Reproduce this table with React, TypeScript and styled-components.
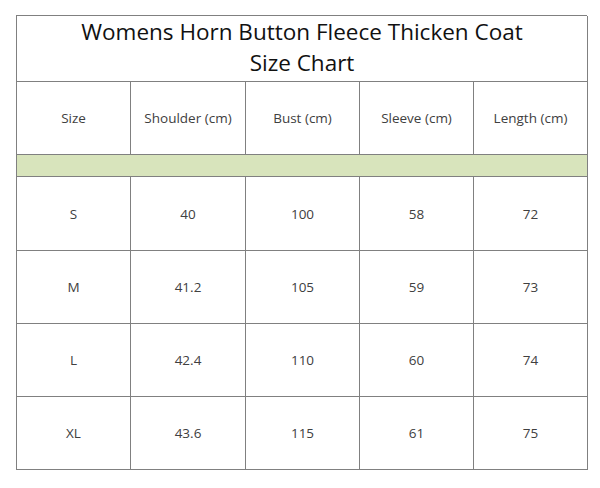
import React from "react";
import styled, { createGlobalStyle } from "styled-components";

const Global = createGlobalStyle`
  html, body { margin: 0; padding: 0; background: #ffffff; }
  body { font-family: "Open Sans", "Liberation Sans", sans-serif; }
`;

const Page = styled.div`
  width: 600px;
  height: 488px;
  padding: 15px 0 0 16px;
  box-sizing: border-box;
`;

const Chart = styled.div`
  width: 571px;
  display: grid;
  grid-template-columns: 114px 115px 114px 114px 114px;
  grid-template-rows: 66px 73px 22px 74px 73px 73px 73px;
  border-top: 1px solid #808080;
  border-left: 1px solid #808080;
  box-sizing: border-box;
`;

const Title = styled.div`
  grid-column: 1 / -1;
  box-sizing: border-box;
  border-right: 1px solid #808080;
  border-bottom: 1px solid #808080;
  display: flex;
  flex-direction: column;
  align-items: center;
  justify-content: center;
  padding-bottom: 4px;
  font-size: 22.5px;
  line-height: 31px;
  color: #111;
`;

const Cell = styled.div`
  box-sizing: border-box;
  border-right: 1px solid #808080;
  border-bottom: 1px solid #808080;
  display: flex;
  align-items: center;
  justify-content: center;
  font-size: 13.5px;
  color: #404040;
`;

const Band = styled.div`
  grid-column: 1 / -1;
  box-sizing: border-box;
  border-right: 1px solid #808080;
  border-bottom: 1px solid #808080;
  background: #d8e4bc;
`;

const headers = ["Size", "Shoulder (cm)", "Bust (cm)", "Sleeve (cm)", "Length (cm)"];
const rows = [
  ["S", "40", "100", "58", "72"],
  ["M", "41.2", "105", "59", "73"],
  ["L", "42.4", "110", "60", "74"],
  ["XL", "43.6", "115", "61", "75"],
];

export default function App() {
  return (
    <Page>
      <Global />
      <Chart>
        <Title>
          <span>Womens Horn Button Fleece Thicken Coat</span>
          <span>Size Chart</span>
        </Title>
        {headers.map((h) => (
          <Cell key={h}>{h}</Cell>
        ))}
        <Band />
        {rows.map((r) => r.map((c, i) => <Cell key={r[0] + i}>{c}</Cell>))}
      </Chart>
    </Page>
  );
}
